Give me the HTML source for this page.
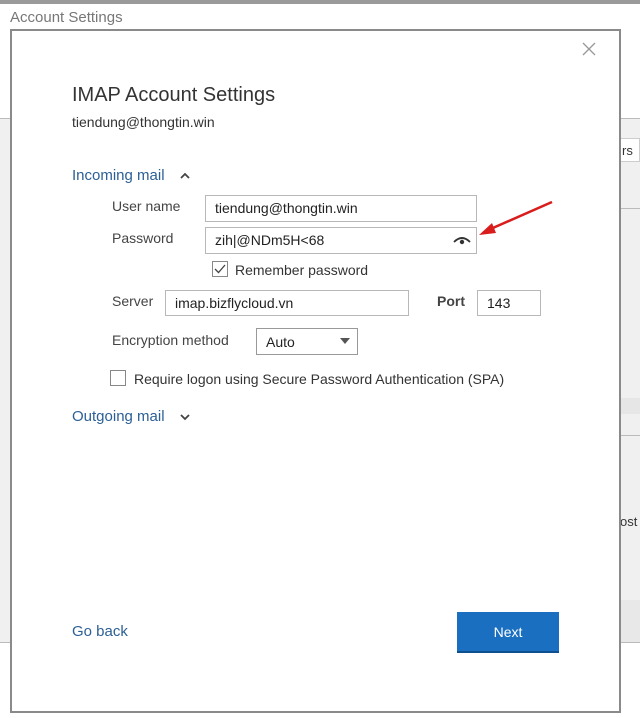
<!DOCTYPE html>
<html><head><meta charset="utf-8"><style>
*{box-sizing:border-box;margin:0;padding:0}
body{width:640px;height:718px;position:relative;overflow:hidden;background:#fff;font-family:"Liberation Sans",sans-serif;color:#333}
.abs{position:absolute}
.bgpanel{background:#f0f0f0}
.dlg{left:10px;top:29px;width:611px;height:684px;background:#fff;border:2px solid #8a8a8a}
.inp{position:absolute;border:1px solid #b8b8b8;background:#fff;font-size:14px;color:#222;padding:4px 0 0 9px;height:27px}
.lbl{position:absolute;font-size:14px;color:#444}
.link{position:absolute;font-size:15px;color:#2b5f95}
</style></head><body>
<div class="abs" style="left:0;top:0;width:640px;height:4px;background:#9a9a9a"></div>
<div class="abs" style="left:10px;top:9px;font-size:15px;color:#777">Account Settings</div>
<div class="abs bgpanel" style="left:0;top:118px;width:12px;height:524px;border-top:1px solid #bbb"></div>
<div class="abs" style="left:0;top:642px;width:640px;height:1px;background:#bbb"></div>
<div class="abs bgpanel" style="left:620px;top:118px;width:20px;height:524px"></div>
<div class="abs" style="left:620px;top:118px;width:20px;height:1px;background:#bbb"></div>
<div class="abs" style="left:620px;top:138px;width:20px;height:24px;background:#fff;border:1px solid #ccc;font-size:13px;padding:4px 0 0 1px">rs</div>
<div class="abs" style="left:620px;top:208px;width:20px;height:1px;background:#bbb"></div>
<div class="abs" style="left:620px;top:398px;width:20px;height:16px;background:#e6e6e6"></div>
<div class="abs" style="left:620px;top:435px;width:20px;height:1px;background:#bbb"></div>
<div class="abs" style="left:620px;top:514px;font-size:13px">ost</div>
<div class="abs" style="left:620px;top:600px;width:20px;height:42px;background:#e8e8e8"></div>

<div class="abs dlg"></div>
<svg class="abs" style="left:582px;top:42px" width="14" height="14"><path d="M1 1L13 13M13 1L1 13" stroke="#999" stroke-width="1.3"/></svg>
<div class="abs" style="left:72px;top:84px;font-size:20px;color:#333">IMAP Account Settings</div>
<div class="abs" style="left:72px;top:114px;font-size:14px;color:#333">tiendung@thongtin.win</div>

<div class="link" style="left:72px;top:167px">Incoming mail</div>
<svg class="abs" style="left:180px;top:172px" width="10" height="8"><path d="M1 6L5 2L9 6" stroke="#444" stroke-width="1.8" fill="none"/></svg>
<div class="lbl" style="left:112px;top:198px">User name</div>
<div class="inp" style="left:205px;top:195px;width:272px">tiendung@thongtin.win</div>
<div class="lbl" style="left:112px;top:230px">Password</div>
<div class="inp" style="left:205px;top:227px;width:272px">zih|@NDm5H&lt;68</div>
<svg class="abs" style="left:452px;top:234px" width="20" height="12"><path d="M2 8Q10 0 18 8" stroke="#333" stroke-width="1.8" fill="none"/><circle cx="10" cy="8" r="2.2" fill="#333"/></svg>
<svg class="abs" style="left:476px;top:198px" width="80" height="40"><path d="M76 4L10 33" stroke="#d91c1c" stroke-width="2.5"/><path d="M3 37L16 25L20 35Z" fill="#d91c1c"/></svg>
<div class="abs" style="left:212px;top:261px;width:16px;height:16px;border:1px solid #888;background:#fff"></div>
<svg class="abs" style="left:214px;top:263px" width="12" height="12"><path d="M1 6L4.5 9.5L11 2" stroke="#444" stroke-width="1.3" fill="none"/></svg>
<div class="lbl" style="left:235px;top:262px;color:#333">Remember password</div>

<div class="lbl" style="left:112px;top:293px">Server</div>
<div class="inp" style="left:165px;top:290px;width:244px;height:26px">imap.bizflycloud.vn</div>
<div class="lbl" style="left:437px;top:293px;font-weight:bold;color:#444">Port</div>
<div class="inp" style="left:477px;top:290px;width:64px;height:26px">143</div>
<div class="lbl" style="left:112px;top:332px">Encryption method</div>
<div class="inp" style="left:256px;top:328px;width:102px;height:27px;border-color:#999;padding-top:5px">Auto</div>
<svg class="abs" style="left:340px;top:338px" width="10" height="6"><path d="M0 0H10L5 6Z" fill="#555"/></svg>
<div class="abs" style="left:110px;top:370px;width:16px;height:16px;border:1px solid #888"></div>
<div class="lbl" style="left:134px;top:371px;color:#333">Require logon using Secure Password Authentication (SPA)</div>

<div class="link" style="left:72px;top:408px">Outgoing mail</div>
<svg class="abs" style="left:180px;top:413px" width="10" height="8"><path d="M1 2L5 6L9 2" stroke="#444" stroke-width="1.8" fill="none"/></svg>

<div class="link" style="left:72px;top:623px">Go back</div>
<div class="abs" style="left:457px;top:612px;width:102px;height:41px;background:#1a6fc0;border-bottom:2px solid #0e4f8f;color:#fff;font-size:14px;text-align:center;line-height:40px">Next</div>
</body></html>
